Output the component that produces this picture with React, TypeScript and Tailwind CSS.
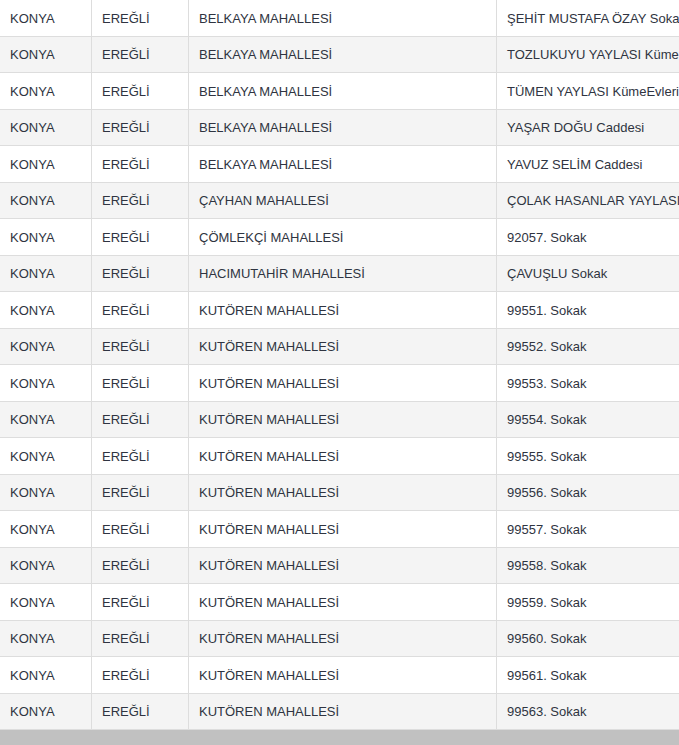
import React from "react";

const rows: [string, string][] = [
  ["BELKAYA MAHALLESİ", "ŞEHİT MUSTAFA ÖZAY Sokak"],
  ["BELKAYA MAHALLESİ", "TOZLUKUYU YAYLASI KümeEvleri"],
  ["BELKAYA MAHALLESİ", "TÜMEN YAYLASI KümeEvleri"],
  ["BELKAYA MAHALLESİ", "YAŞAR DOĞU Caddesi"],
  ["BELKAYA MAHALLESİ", "YAVUZ SELİM Caddesi"],
  ["ÇAYHAN MAHALLESİ", "ÇOLAK HASANLAR YAYLASI KümeEvleri"],
  ["ÇÖMLEKÇİ MAHALLESİ", "92057. Sokak"],
  ["HACIMUTAHİR MAHALLESİ", "ÇAVUŞLU Sokak"],
  ["KUTÖREN MAHALLESİ", "99551. Sokak"],
  ["KUTÖREN MAHALLESİ", "99552. Sokak"],
  ["KUTÖREN MAHALLESİ", "99553. Sokak"],
  ["KUTÖREN MAHALLESİ", "99554. Sokak"],
  ["KUTÖREN MAHALLESİ", "99555. Sokak"],
  ["KUTÖREN MAHALLESİ", "99556. Sokak"],
  ["KUTÖREN MAHALLESİ", "99557. Sokak"],
  ["KUTÖREN MAHALLESİ", "99558. Sokak"],
  ["KUTÖREN MAHALLESİ", "99559. Sokak"],
  ["KUTÖREN MAHALLESİ", "99560. Sokak"],
  ["KUTÖREN MAHALLESİ", "99561. Sokak"],
  ["KUTÖREN MAHALLESİ", "99563. Sokak"],
];

export default function App() {
  return (
    <div
      className="w-[679px] h-[745px] overflow-hidden bg-white flex flex-col text-[13px] text-[#2f3441]"
      style={{ fontFamily: '"Liberation Sans", Arial, sans-serif' }}
    >
      <div className="flex flex-col">
        {rows.map(([m, s], i) => (
          <div
            key={i}
            className={`flex h-[36.5px] border-b border-[#dddddd] whitespace-nowrap ${
              i % 2 === 1 ? "bg-[#f4f4f4]" : "bg-white"
            }`}
          >
            <div className="w-[91px] shrink-0 pl-[10px] pt-[1px] flex items-center">KONYA</div>
            <div className="w-[97px] shrink-0 pl-[10px] pt-[1px] border-l border-[#dddddd] flex items-center">EREĞLİ</div>
            <div className="w-[308px] shrink-0 pl-[10px] pt-[1px] border-l border-[#dddddd] flex items-center">{m}</div>
            <div className="w-[320px] shrink-0 pl-[10px] pt-[1px] border-l border-[#dddddd] flex items-center">{s}</div>
          </div>
        ))}
      </div>
      <div className="h-[15px] bg-[#c1c1c1] shrink-0" />
    </div>
  );
}
